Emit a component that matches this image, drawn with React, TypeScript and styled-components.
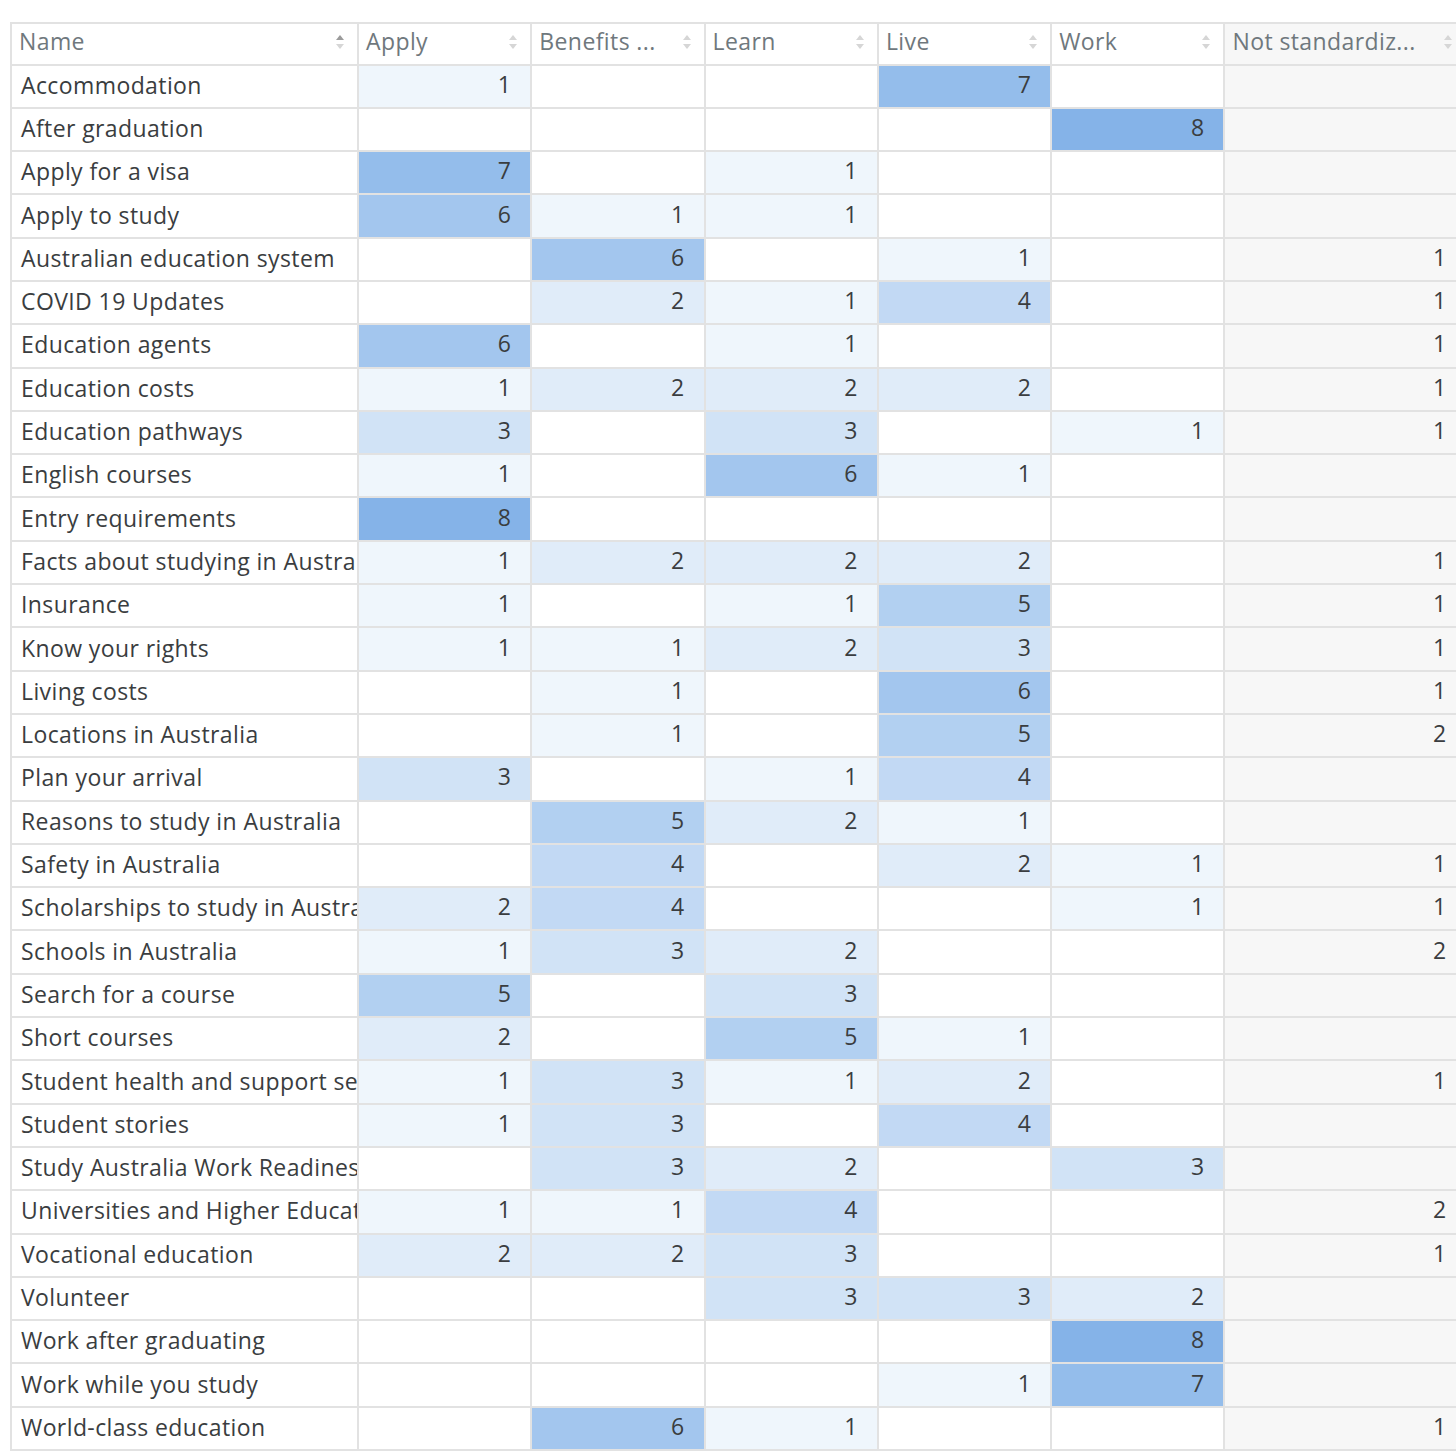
import React from "react";
import { styled, createGlobalStyle } from "styled-components";

const GlobalStyle = createGlobalStyle`
    body {
        margin: 0;
        background: #ffffff;
        font-family: "Open Sans", "Liberation Sans", sans-serif;
    }
`;

const columns = ["Apply", "Benefits ...", "Learn", "Live", "Work", "Not standardiz..."];

type Row = [string, (number | null)[]];

const _ = null;

const rows: Row[] = [
    ["Accommodation", [1, _, _, 7, _, _]],
    ["After graduation", [_, _, _, _, 8, _]],
    ["Apply for a visa", [7, _, 1, _, _, _]],
    ["Apply to study", [6, 1, 1, _, _, _]],
    ["Australian education system", [_, 6, _, 1, _, 1]],
    ["COVID 19 Updates", [_, 2, 1, 4, _, 1]],
    ["Education agents", [6, _, 1, _, _, 1]],
    ["Education costs", [1, 2, 2, 2, _, 1]],
    ["Education pathways", [3, _, 3, _, 1, 1]],
    ["English courses", [1, _, 6, 1, _, _]],
    ["Entry requirements", [8, _, _, _, _, _]],
    ["Facts about studying in Australia", [1, 2, 2, 2, _, 1]],
    ["Insurance", [1, _, 1, 5, _, 1]],
    ["Know your rights", [1, 1, 2, 3, _, 1]],
    ["Living costs", [_, 1, _, 6, _, 1]],
    ["Locations in Australia", [_, 1, _, 5, _, 2]],
    ["Plan your arrival", [3, _, 1, 4, _, _]],
    ["Reasons to study in Australia", [_, 5, 2, 1, _, _]],
    ["Safety in Australia", [_, 4, _, 2, 1, 1]],
    ["Scholarships to study in Australia", [2, 4, _, _, 1, 1]],
    ["Schools in Australia", [1, 3, 2, _, _, 2]],
    ["Search for a course", [5, _, 3, _, _, _]],
    ["Short courses", [2, _, 5, 1, _, _]],
    ["Student health and support services", [1, 3, 1, 2, _, 1]],
    ["Student stories", [1, 3, _, 4, _, _]],
    ["Study Australia Work Readiness", [_, 3, 2, _, 3, _]],
    ["Universities and Higher Education", [1, 1, 4, _, _, 2]],
    ["Vocational education", [2, 2, 3, _, _, 1]],
    ["Volunteer", [_, _, 3, 3, 2, _]],
    ["Work after graduating", [_, _, _, _, 8, _]],
    ["Work while you study", [_, _, _, 1, 7, _]],
    ["World-class education", [_, 6, 1, _, _, 1]],
];

// heat colour: white -> #85b3e8 over 0..8
const heat = (v: number | null) => {
    if (v === null) return "#ffffff";
    const t = v / 8;
    const mix = (a: number, b: number) => Math.round(a + (b - a) * t);
    return `rgb(${mix(254, 133)}, ${mix(255, 179)}, ${mix(255, 232)})`;
};

const SortIcon = ({ active }: { active?: boolean }) => (
    <svg width="8" height="14" viewBox="0 0 8 14">
        <path d="M4 0 L8 5 L0 5 Z" fill={active ? "#9b9b9b" : "#d6d6d6"} />
        <path d="M0 9 L8 9 L4 14 Z" fill="#d6d6d6" />
    </svg>
);

export default function App() {
    return (
        <Page>
            <GlobalStyle />
            <Grid>
                <HeadCell>
                    <HeadLabel>Name</HeadLabel>
                    <SortIcon active />
                </HeadCell>
                {columns.map((c, i) => (
                    <HeadCell key={c} muted={i === columns.length - 1}>
                        <HeadLabel>{c}</HeadLabel>
                        <SortIcon />
                    </HeadCell>
                ))}
                {rows.map(([name, values]) => (
                    <React.Fragment key={name}>
                        <NameCell title={name}>{name}</NameCell>
                        {values.map((v, i) =>
                            i === values.length - 1 ? (
                                <ValueCell key={i} bg="#f7f7f7">
                                    {v ?? ""}
                                </ValueCell>
                            ) : (
                                <ValueCell key={i} bg={heat(v)}>
                                    {v ?? ""}
                                </ValueCell>
                            )
                        )}
                    </React.Fragment>
                ))}
            </Grid>
        </Page>
    );
}

const Page = styled.div`
    width: 1456px;
    height: 1454px;
    overflow: hidden;
    padding: 22px 0 0 10px;
    box-sizing: border-box;
`;

const Grid = styled.div`
    display: grid;
    grid-template-columns: 345px repeat(5, 171.3px) 240px;
    grid-template-rows: 39.5px;
    grid-auto-rows: 41.3px;
    gap: 2px;
    padding: 2px;
    width: max-content;
    background: #e2e2e2;
    font-size: 23px;
    line-height: 1.3;
    letter-spacing: 0.4px;
`;

const HeadCell = styled.div<{ muted?: boolean }>`
    display: flex;
    align-items: center;
    justify-content: space-between;
    padding: 0 13px 4px 7px;
    background: ${(p) => (p.muted ? "#f7f7f7" : "#ffffff")};
    color: #6f787d;
    overflow: hidden;
`;

const HeadLabel = styled.span`
    white-space: nowrap;
`;

const NameCell = styled.div`
    display: flex;
    align-items: center;
    padding: 0 0 1px 9px;
    background: #ffffff;
    color: #3a3d40;
    white-space: nowrap;
    overflow: hidden;
`;

const ValueCell = styled.div<{ bg: string }>`
    display: flex;
    align-items: center;
    justify-content: flex-end;
    padding: 0 19px 3px 0;
    background: ${(p) => p.bg};
    color: #3a3d40;
`;
